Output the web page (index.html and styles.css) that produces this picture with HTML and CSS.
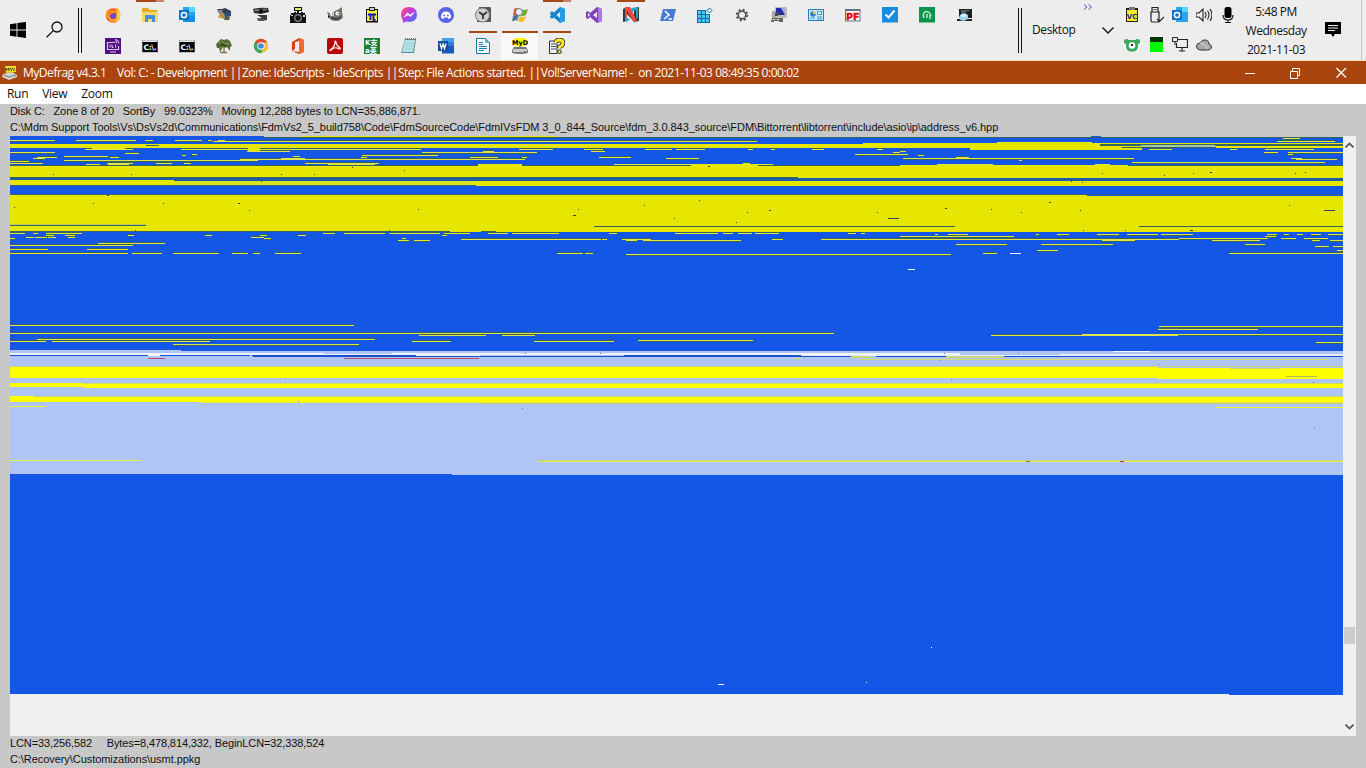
FILE: index.html
```html
<!DOCTYPE html>
<html lang="en">
<head>
<meta charset="utf-8">
<title>MyDefrag v4.3.1</title>
<link rel="stylesheet" href="styles.css">
</head>
<body>
<header class="taskbar">
  <svg class="start" viewBox="0 0 16 16"><path d="M0 2.2 6.5 1.3V7.5H0zM7.4 1.1 16 0v7.5H7.4zM0 8.4h6.5v6.3L0 13.8zM7.4 8.4H16V16l-8.6-1.2z"/></svg>
  <svg class="search" viewBox="0 0 17 17"><g fill="none" stroke="#111" stroke-width="1.3"><circle cx="11" cy="6" r="5"/><path d="M7.3 9.6.6 16.3"/></g></svg>
  <i class="grip"></i>
  <nav class="apps">
    <div class="app"><svg viewBox="0 0 16 16"><circle cx="8" cy="8.5" r="7.3" fill="#ff5a2c"/><path d="M2 3Q0 8 2 12q4 5 9 2 4-3 4-8-1-4-5-6 2 3 0 4-5-1-8-1z" fill="#ff9d1c"/><path d="M13 3q3 3 2 7-1 4-5 5 3-4 2-8z" fill="#ffd52e"/><path d="M1 9q2 7 8 7-4 0-5-3z" fill="#f2306b"/><circle cx="8" cy="8.6" r="3.4" fill="#7048c8"/><path d="M3 5q3-2 7 1l-4 1q-2 2 0 4-3-1-3-6" fill="#ff7a22"/></svg></div>
    <div class="app open more"><svg viewBox="0 0 16 16"><path d="M0 1h6l2 2h7v12H0z" fill="#e7aa2c"/><path d="M0 5h16v10H0z" fill="#ffd766"/><path d="M3 15V9q0-1 1-1h8q1 0 1 1v6h-3v-3H6v3z" fill="#3c91d9"/></svg></div>
    <div class="app"><svg viewBox="0 0 16 16"><path d="M4 0h12v15H4z" fill="#28a8ea"/><path d="M10 0h6v5h-6z" fill="#50d9ff"/><path d="M4 10l12-2v7H4z" fill="#1490df"/><rect y="3" width="10" height="10" fill="#0f70c4"/><circle cx="5" cy="8" r="2.6" fill="none" stroke="#fff" stroke-width="1.5"/></svg></div>
    <div class="app"><svg viewBox="0 0 16 16"><path d="M1 2l5 0 3-1 6 3v5l-5 1-6-4z" fill="#343d50"/><path d="M1 3l5 0 1 3-4 1z" fill="#888c90"/><path d="M4 6h5l2 4-4 2-4-3z" fill="#ba8a4c"/><path d="M8 6l6-1 1 4-6 1z" fill="#2d5286"/><path d="M3 8l2 2v1H2z" fill="#d3a52a"/><path d="M9 10h5l-1 3H8z" fill="#5f5548"/></svg></div>
    <div class="app"><svg viewBox="0 0 16 16"><path d="M0 2q7-2 15-1l1 4-8 2-7-1z" fill="#292929"/><path d="M1 2.500l13-1v1.500L2 4.500z" fill="#777"/><circle cx="8" cy="4" r="2" fill="#111"/><path d="M4 8h10v5l-5 1-4-2 4-1z" fill="#393939"/><path d="M4 11l7 1-1 2-5 0z" fill="#555"/></svg></div>
    <div class="app"><svg viewBox="0 0 16 16"><path d="M4 0h8v4H4z" fill="#111"/><path d="M5 1h6v2H5z" fill="#dfe868"/><path d="M7 4h2v2H7zM0 8h1V6h3V5h2v1h5V5h2v1h2v2h1v8H0z" fill="#111"/><circle cx="8" cy="11" r="4" fill="#777"/><circle cx="8" cy="11" r="2.500" fill="#111"/><path d="M1 8h2v1H1zM13 8h2v2h-2z" fill="#ddd"/></svg></div>
    <div class="app"><svg viewBox="0 0 16 16"><path d="M0 5l3 1 3-1 6-3 3-2v5l1 5q-2 4-7 4-6 0-7-4z" fill="#75756b"/><circle cx="5" cy="7" r="2" fill="#fff"/><circle cx="10.500" cy="6.500" r="2" fill="#fff"/><path d="M5 6.500h1v1H5zM10.500 6h1v1h-1zM1 8l2 2-2 1z" fill="#111"/><path d="M4 11l6 1 4-2" fill="none" stroke="#333" stroke-width="1.300"/></svg></div>
    <div class="app"><svg viewBox="0 0 16 16"><path d="M2 2h12v13.500H2z" fill="#111"/><path d="M3 3h10v11H3z" fill="#f6ee30"/><path d="M5 0h6v4H5z" fill="#222"/><path d="M6 1h4v2H6z" fill="#ccc"/><path d="M4 7.500h8M6.500 7.500V13M9.500 7.500V13h2" fill="none" stroke="#1414c8" stroke-width="1.800"/></svg></div>
    <div class="app"><svg viewBox="0 0 16 16"><defs><linearGradient id="msg" y2="1"><stop stop-color="#fa5968"/><stop offset=".45" stop-color="#c738df"/><stop offset="1" stop-color="#168fff"/></linearGradient></defs><path d="M8 0q8 0 8 7.5T8 15l-3-.4L2 16v-3Q0 11 0 7.5 0 0 8 0" fill="url(#msg)"/><path d="M3 10l3.500-4L9 8l4-2.500-3.500 4L7 7.700z" fill="#fff" stroke="#fff" stroke-width=".7"/></svg></div>
    <div class="app"><svg viewBox="0 0 16 16"><circle cx="8" cy="8" r="8" fill="#5864e8"/><path d="M3 11q0-4 2-6 3-1 6 0 2 2 2 6l-2.500 1-1-1.400h-3l-1 1.400z" fill="#fff"/><circle cx="6.200" cy="8.400" r="1" fill="#5864e8"/><circle cx="9.800" cy="8.400" r="1" fill="#5864e8"/></svg></div>
    <div class="app"><svg viewBox="0 0 16 16"><path d="M4 0h11q1 0 1 2v13H2z" fill="#555"/><circle cx="7.500" cy="8" r="7" fill="#d1d1cf" stroke="#777"/><path d="M4 5L8 8l4-3M8 8v4" fill="none" stroke="#333" stroke-width="1.800"/></svg></div>
    <div class="app"><svg viewBox="0 0 16 16"><path d="M2 2q3-2 6 0L7 8Q4 7 1 9z" fill="#e64d26"/><path d="M9 2q3 2 7 0l-2 6q-3 2-7 0z" fill="#70ae35"/><path d="M1 9q3-2 6 0l-2 5q-3-2-5 0z" fill="#438ad0"/><path d="M8 9q3 2 6 0l-2 5q-3 2-6 0z" fill="#f4bc20"/><circle cx="7" cy="5" r="3.500" fill="#e2f1ff" stroke="#778"/><path d="M5 8l-4 6" stroke="#755" stroke-width="1.500"/></svg></div>
    <div class="app open more"><svg viewBox="0 0 16 16"><path d="M11 0l5 2v12l-5 2L1 7V6l2-2 8 7V5L3 12l-2-2V9z" fill="#1688d0"/><path d="M11 0l5 2v12l-5 2z" fill="#279ce3"/></svg></div>
    <div class="app"><svg viewBox="0 0 16 16"><path d="M11 0l5 2v12l-5 2-7-6-2 2-2-1V5l2-1 2 2zM2 6v4l2-2zm9-1L7 8l4 3z" fill="#7d43b5" fill-rule="evenodd"/><path d="M12 0l4 2v12l-4 2z" fill="#a979df"/></svg></div>
    <div class="app open"><svg viewBox="0 0 16 16"><path d="M0 2l4-2 7 9V1l5-1v14l-5 1-7-8v7l-4 1z" fill="#34383a"/><path d="M2 0h5l7 14h-4L4 4v8l-2 1z" fill="#ee493a"/><path d="M8 1l7-1v12l-2-2V3L9 5zM2 9l5 4-5 2z" fill="#25a6c4"/></svg></div>
    <div class="app"><svg viewBox="0 0 16 16"><path d="M3 2h13l-3 12H0z" fill="#477bd1"/><path d="M5 4l4 4-5 4M8.500 12H12" fill="none" stroke="#fff" stroke-width="1.600"/></svg></div>
    <div class="app"><svg viewBox="0 0 16 16"><path d="M0 3h13v13H0z" fill="#126ca0"/><path d="M1 4h3v3H1zM5 4h3v3H5zM1 8h3v3H1zM5 8h3v3H5zM9 8h3v3H9zM1 12h3v3H1zM5 12h3v3H5zM9 12h3v3H9z" fill="#48c5ef"/><path d="M9 3h4v4H9z" fill="#eee"/><path d="M12.500 1l2.500 2.500L12.500 6 10 3.500z" fill="#d8f4fc" stroke="#17699a"/></svg></div>
    <div class="app"><svg viewBox="0 0 16 16"><circle cx="8" cy="8" r="5.200" fill="none" stroke="#505050" stroke-width="2" stroke-dasharray="2.040"/><circle cx="8" cy="8" r="3.800" fill="none" stroke="#505050" stroke-width="1.500"/></svg></div>
    <div class="app"><svg viewBox="0 0 16 16"><path d="M4 0h12v11H4z" fill="#c2bdaa"/><path d="M5 1h9v7H5z" fill="#222ca5"/><path d="M10 1h4v7z" fill="#99a8f0"/><path d="M1 4h4v7H1z" fill="#aaa"/><path d="M4 6l4-1-1 4H4z" fill="#44485b"/><path d="M1 11h11v4H0z" fill="#666"/><path d="M2 12h2v1H2zm4 0h2v1H6zM3 14h5v1H3z" fill="#eee"/></svg></div>
    <div class="app"><svg viewBox="0 0 16 16"><path d="M0 2h16v12H0z" fill="#247eb4"/><path d="M1 3h14v10H1z" fill="#c4efff"/><circle cx="5" cy="7" r="2.800" fill="#3679c3"/><path d="M5 4a3 3 0 0 1 3 3H5z" fill="#f7c947"/><path d="M9 4h5v4H9z" fill="#4799d6"/><path d="M10 5h3v2h-3z" fill="#e9f8ff"/><path d="M2 11h5M9 10h5M9 12h5" stroke="#448cc0"/></svg></div>
    <div class="app"><svg viewBox="0 0 16 16"><path d="M0 2h15.500v12.500H0z" fill="#5b7088"/><path d="M1 4h13.500v9.500H1z" fill="#fff"/><text x="7.800" y="12.500" text-anchor="middle" font-size="9.500" font-weight="bold" fill="#e00010" stroke="#e00010" stroke-width=".4">PF</text></svg></div>
    <div class="app"><svg viewBox="0 0 16 16"><path d="M0 0h16v15.500H0z" fill="#188bdc"/><path d="M3.500 7.500l3 3 6-7" fill="none" stroke="#fff" stroke-width="2"/></svg></div>
    <div class="app"><svg viewBox="0 0 16 16"><path d="M0 0h16v15.500H0z" fill="#08964a"/><path d="M5 11Q3 6 7 4.500q4 0 5 5M8 7v4M11 8v4" fill="none" stroke="#b3e2c6" stroke-width="1.600"/></svg></div>
    <div class="app"><svg viewBox="0 0 16 16"><path d="M3 2h13v9H3z" fill="#1c1f22"/><path d="M5 3h10l-10 4z" fill="#575e64"/><path d="M1 12h15v2H1z" fill="#222"/><path d="M3 10l2-3 4-1 3 2v4l-4 2-4-1z" fill="#9acfe6"/><path d="M4 9l4-2 3 2-3 1z" fill="#e3faff"/></svg></div>

    <div class="app"><svg viewBox="0 0 16 16"><path d="M0 0h16v16H0z" fill="#4b1183"/><path d="M2 4.500h8M2.500 4.500v7h11V8M5 14h6" fill="none" stroke="#e7b9ed" stroke-width="1.200"/><path d="M5 6.500v3M7 6.500v3h1.500M10.500 6.500v3M10 3q2 0 2 2.500M10 1.500q4 0 4 4" fill="none" stroke="#f0c7f4"/></svg></div>
    <div class="app"><svg viewBox="0 0 16 16"><path d="M0 2h16v12.500H0z" fill="#999"/><path d="M.500 4h15v10H.500z" fill="#000"/><path d="M1 2.500h14V4H1z" fill="#eee"/><text x="1.500" y="11.500" font-size="7.500" font-weight="bold" fill="#fff" textLength="13">C:\.</text></svg></div>
    <div class="app"><svg viewBox="0 0 16 16"><path d="M0 2h16v12.500H0z" fill="#999"/><path d="M.500 4h15v10H.500z" fill="#000"/><path d="M1 2.500h14V4H1z" fill="#eee"/><text x="1.500" y="11.500" font-size="7.500" font-weight="bold" fill="#fff" textLength="13">C:\.</text></svg></div>
    <div class="app"><svg viewBox="0 0 16 16"><path d="M8 8v7M4 14.500h7" stroke="#8b6a46" stroke-width="1.300"/><path d="M0 6l3-3 2-2 3 1 3-1 3 2 2 5-2 1 0 4-3-4-2 1-2-1-3 5-1-4-2 0z" fill="#536b32"/><path d="M2 6l4-3 3 3 4-1-3 4-4 0-3 2" fill="none" stroke="#7e974b"/><path d="M5 7l6 1" stroke="#2d431c" stroke-width="1.500"/></svg></div>
    <div class="app"><svg viewBox="0 0 16 16"><circle cx="8" cy="8" r="7.200" fill="#eac633"/><path d="M8 8L1.800 4.400A7.200 7.200 0 0 1 14.200 4.400H8z" fill="#e04a3d"/><path d="M8 8L1.800 4.400A7.200 7.200 0 0 0 8 15.200L11 9z" fill="#3ba35a"/><circle cx="8" cy="8" r="3.700" fill="#fff"/><circle cx="8" cy="8" r="2.800" fill="#4388e8"/></svg></div>
    <div class="app"><svg viewBox="0 0 16 16"><path d="M2 4l7-4 5 2v12l-5 2-7-3 7 1V3L5 4v7l-3 2z" fill="#dc3d0b"/><path d="M9 0l5 2v12l-5 2z" fill="#f36a2c"/></svg></div>
    <div class="app"><svg viewBox="0 0 16 16"><rect width="16" height="16" rx="2" fill="#b90808"/><path d="M3 12q5-3 5-8 0-2 1 0 0 3 4 6 1 2-3 0-3-1-6 2-1 1-1 0z" fill="none" stroke="#fff" stroke-width="1.200"/></svg></div>
    <div class="app"><svg viewBox="0 0 16 16"><path d="M0 0h16v16H0z" fill="#16803b"/><text x="1" y="7" font-size="7" font-weight="bold" fill="#fff">K安</text><text x="1" y="14.500" font-size="7" font-weight="bold" fill="#fff">a英</text></svg></div>
    <div class="app"><svg viewBox="0 0 16 16"><path d="M4 1h11l-2 14H0z" fill="#568b99"/><path d="M4 2h10l-2 12H1z" fill="#b9e2e8"/><path d="M4 5h9M3 8h9M3 11h8" stroke="#9fd0d9"/><path d="M4 1h11" stroke="#777" stroke-width="2" stroke-dasharray="1"/></svg></div>
    <div class="app"><svg viewBox="0 0 16 16"><path d="M4 0h12v15.500H4z" fill="#185abd"/><path d="M4 0h12v4H4z" fill="#41a5ee"/><path d="M4 4h12v4H4z" fill="#2b7cd3"/><path d="M0 3h10v10H0z" fill="#174f9f"/><path d="M2 5.500l1.500 5L5 6l1.500 4.500 1.500-5" fill="none" stroke="#fff" stroke-width="1.300"/></svg></div>
    <div class="app open"><svg viewBox="0 0 16 16"><path d="M1.500.500h9l4 4v11h-13z" fill="#fff" stroke="#14799e"/><path d="M10 0v5h5" fill="#68b8d4"/><path d="M4 4.500h4M4 6.500h4M4 8.500h8M4 10.500h8M4 12.500h5" stroke="#1687b5"/></svg></div>
    <div class="app open active"><svg viewBox="0 0 16 16"><path d="M2 9h12l2 3v3q-8 2-16 0v-3z" fill="#777"/><path d="M1 11h14v3H1z" fill="#ccc"/><path d="M12 13h2v1h-2z" fill="#18a23a"/><ellipse cx="8" cy="4" rx="8" ry="4.500" fill="#fff000"/><text x="8" y="6.500" text-anchor="middle" font-size="6.500" font-weight="bold">MyD</text></svg></div>
    <div class="app open"><svg viewBox="0 0 16 16"><path d="M.500 3H8v12.500H.500z" fill="#eee" stroke="#333"/><path d="M2 6h5M2 8.500h5M2 11h5" stroke="#557"/><path d="M7 5q0-3 3.500-3Q14 2 14 5q0 2.500-3.500 4v1" fill="none" stroke="#222" stroke-width="4.500"/><path d="M6.500 5q0-3 4-3Q14 2 14 5q0 2.500-3.500 4v1.500" fill="none" stroke="#ffea20" stroke-width="2.800"/><circle cx="10.500" cy="13.700" r="1.800" fill="#ffea20" stroke="#222"/></svg></div>
  </nav>
  <i class="grip"></i>
  <div class="desktop"><span>Desktop</span><svg class="more-bars" viewBox="0 0 10 6"><path d="M1 .500l3 2.500-3 2.500M5.500.500l3 2.500-3 2.500" fill="none" stroke="#5656b8"/></svg><svg class="expand" viewBox="0 0 12 7"><path d="M.500.500L6 6 11.500.500" fill="none" stroke="#111" stroke-width="1.400"/></svg></div>
  <div class="tray">
    <svg viewBox="0 0 16 16"><path d="M2 1h12v14H2z" fill="#222"/><path d="M3 3h10v11H3z" fill="#f5ed24"/><path d="M5 0h6v3H5z" fill="#777"/><text x="8" y="11.500" text-anchor="middle" font-size="7" font-weight="bold" fill="#242480">VC</text></svg>
    <svg viewBox="0 0 16 16"><path d="M4 5V.500h6V5M3 5h8v10H4q-1 0-1-2zM6 2v1M8 2v1M9 12l2.500 2.500L16 10" fill="none" stroke="#222" stroke-width="1.200"/></svg>
    <svg viewBox="0 0 16 16"><path d="M4 0h12v15H4z" fill="#28a8ea"/><path d="M10 0h6v5h-6z" fill="#50d9ff"/><rect y="3" width="10" height="10" fill="#0f70c4"/><circle cx="5" cy="8" r="2.600" fill="none" stroke="#fff" stroke-width="1.500"/></svg>
    <svg viewBox="0 0 16 16"><path d="M0 6h3l4-4v12l-4-4H0zM9 5q2 3 0 6M11.500 3.500q3 4.500 0 9M14 2q4 6 0 12" fill="none" stroke="#222" stroke-width="1.100"/></svg>
    <svg viewBox="0 0 16 16"><rect x="4.500" width="7" height="11" rx="2.500"/><path d="M3 8q0 5 5 5t5-5M8 13v3M5 15.500h6" fill="none" stroke="#111" stroke-width="1.200"/></svg>
    <svg viewBox="0 0 16 16"><circle cx="2.500" cy="4.500" r="2.500" fill="#3aa85d"/><circle cx="13.500" cy="4.500" r="2.500" fill="#3aa85d"/><path d="M2 3h12v6q0 5.500-6 5.500T2 9z" fill="#3aa85d"/><circle cx="8" cy="8.500" r="3.300" fill="#fff"/><path d="M7 7h2v2H7z" fill="#222"/></svg>
    <svg viewBox="0 0 16 16"><path d="M2 0h13v15H2z" fill="#003600"/><path d="M2 5h13v10H2z" fill="#00f800"/></svg>
    <svg viewBox="0 0 16 16"><path d="M6 2.500h9.500v8H4.500V6M10 10v4M7 14h6" fill="none" stroke="#222" stroke-width="1.200"/><path d="M.500.500h5v4h-5zM3 5v3" fill="#eee" stroke="#222"/></svg>
    <svg viewBox="0 0 16 16"><path d="M4 13Q0 12 .500 9 1 6 4 6q2-4 6-3 3 1 3 4 3 1 2.500 4-1 2-4 2z" fill="#aaa" stroke="#333"/><path d="M4 6q5 0 8 6" fill="none" stroke="#ddd"/></svg>
  </div>
  <div class="clock">5:48 PM<br>Wednesday<br>2021-11-03</div>
  <svg class="note" viewBox="0 0 16 16"><path d="M0 0h16v12H10l-2 3-2-3H0z"/><path d="M3 3.500h10M3 6h10M3 8.500h7" stroke="#eee"/></svg>
  <i class="peek"></i>
</header>
<main class="window">
  <div class="title">
    <svg class="logo" viewBox="0 0 15 14"><path d="M1 8l9-2 5 3v2l-8 3-7-3z" fill="#d4d4d4"/><path d="M2 9l5 2 7-2" stroke="#777" fill="none"/><path d="M3 0h11v6L4 7z" fill="#e7df20"/><path d="M4 5V2l1.500 2L7 2v3M8 2l1.500 1.500L11 2M9.500 3.500V5M12 2v3" fill="none" stroke="#222" stroke-width=".8"/></svg>
    <span class="caption">MyDefrag v4.3.1    Vol: C: - Development ||Zone: IdeScripts - IdeScripts ||Step: File Actions started. ||Vol!ServerName! -  on 2021-11-03 08:49:35 0:00:02</span>
    <svg class="controls" viewBox="0 0 104 12"><g fill="none" stroke="#fff"><path d="M0 6.500h10M45.500 4.500h7v7h-7zM47.500 4V1.500h7v7H53"/><path d="M91.500 1l9.500 9.500M101 1l-9.500 9.500" stroke-width="1.300"/></g></svg>
  </div>
  <div class="menu"><span>Run</span><span>View</span><span>Zoom</span></div>
  <div class="status top">
    <div class="state">Disk C:   Zone 8 of 20   SortBy   99.0323%   Moving 12,288 bytes to LCN=35,886,871.</div>
    <div class="path">C:\Mdm Support Tools\Vs\DsVs2d\Communications\FdmVs2_5_build758\Code\FdmSourceCode\FdmIVsFDM 3_0_844_Source\fdm_3.0.843_source\FDM\Bittorrent\libtorrent\include\asio\ip\address_v6.hpp</div>
  </div>
  <div class="view">
    <svg id="map" class="map" viewBox="10 136 1333 600" shape-rendering="crispEdges"></svg>
    <div class="scroll">
      <svg viewBox="0 0 9 6"><path d="M.500 5.500l4-4 4 4" fill="none" stroke="#505050" stroke-width="1.600"/></svg>
      <i class="thumb"></i>
      <svg viewBox="0 0 9 6"><path d="M.500.500l4 4 4-4" fill="none" stroke="#505050" stroke-width="1.600"/></svg>
    </div>
  </div>
  <div class="status bottom">
    <div class="state">LCN=33,256,582     Bytes=8,478,814,332, BeginLCN=32,338,524</div>
    <div class="path">C:\Recovery\Customizations\usmt.ppkg</div>
  </div>
</main>
<script src="map.js"></script>
</body>
</html>
```
FILE: styles.css
```css
* { box-sizing: border-box; }
body { margin: 0; width: 1366px; height: 768px; overflow: hidden; background: #c8c8c8; font-family: "Open Sans", "Noto Sans", sans-serif; color: #111; }
svg { display: block; }
svg text { font-family: "DejaVu Sans", "Noto Sans CJK SC", sans-serif; }
.taskbar { display: flex; height: 61px; background: #ededed; border-bottom: 1px solid #f5e3bd; }
.start { width: 16px; height: 16px; margin: 22px 0 0 10px; }
.search { width: 17px; height: 17px; margin: 21px 0 0 20px; }
.grip { width: 4px; height: 45px; margin-top: 8px; border: solid #111; border-width: 0 1px; }
.search + .grip { margin-left: 15px; }
.apps { display: grid; grid-template-columns: repeat(24, 37px); grid-template-rows: 31px 29px; width: 888px; margin-left: 12px; }
.app { padding: 7px 0 0 11px; background-repeat: no-repeat; background-position: 5px 0; background-size: 28px 2px; }
.app svg { width: 16px; height: 16px; }
.open { background-image: linear-gradient(#a84816, #a84816); }
.open.more { background-image: linear-gradient(90deg, #a84816 20px, #c4866a 20px); }
.open.active { background-color: #f9f9f9; background-position: 1px 0; background-size: 36px 2px; }
.apps + .grip { margin-left: 36px; }
.desktop { display: grid; grid-template-columns: 51px 19px 12px; width: 82px; margin-left: 10px; font-size: 12px; line-height: 60px; letter-spacing: -.4px; }
.more-bars { width: 10px; height: 6px; margin-top: 4px; }
.expand { width: 12px; height: 7px; margin-top: 27px; }
.tray { display: grid; grid-template-columns: repeat(5, 24px); grid-template-rows: 30px 30px; width: 120px; margin-left: 10px; padding-top: 7px; }
.tray svg { width: 16px; height: 16px; }
.clock { width: 84px; margin: 2px 0 0 -10px; text-align: center; font-size: 12px; line-height: 19px; letter-spacing: -.45px; }
.note { width: 16px; height: 16px; margin: 22px 0 0 7px; }
.peek { width: 1px; height: 60px; margin-left: 20px; background: #c5c5c5; }
.title { display: flex; align-items: center; height: 23px; background: #ab450f; color: #fff; }
.logo { width: 15px; height: 14px; margin-left: 2px; }
.caption { width: 1222px; padding-left: 6px; white-space: pre; font-size: 12px; letter-spacing: -.465px; }
.controls { width: 104px; height: 12px; margin-left: 6px; }
.menu { display: flex; gap: 14px; height: 20px; padding-left: 7px; background: #fff; font-size: 12px; line-height: 20px; letter-spacing: -.3px; }
.status { height: 32px; padding-left: 10px; font: 11px/16px "Liberation Sans", sans-serif; }
.status div { white-space: pre; }
.top { line-height: 15.500px; }
.bottom { line-height: 15.500px; }
.state { letter-spacing: -.11px; }
.path { letter-spacing: -.065px; }
.view { display: flex; height: 600px; padding-left: 10px; }
.map { width: 1333px; height: 600px; }
.scroll { display: flex; flex-direction: column; align-items: center; width: 13px; height: 600px; padding: 6px 0; background: #f0f0f0; }
.scroll svg { width: 9px; height: 6px; }
.thumb { width: 11px; height: 17px; margin: 479px 0 80px; background: #cdcdcd; }
```
FILE: map.js
```js
const map = document.getElementById('map');
const BLUE = '#1457e6', YELLOW = '#e6e600', LIGHT = '#afc5f5', BRIGHT = '#ffff00', GREEN = '#35645f';
const THIN = '#dfe548';

function rect(x1, x2, y, h, fill) {
  const r = document.createElementNS('http://www.w3.org/2000/svg', 'rect');
  r.setAttribute('x', x1);
  r.setAttribute('y', y);
  r.setAttribute('width', x2 - x1);
  r.setAttribute('height', h);
  r.setAttribute('fill', fill);
  map.append(r);
}

function rows(list, shaded, color) {
  if (shaded) for (const [y, ...p] of list) for (let i = 0; i < p.length; i += 2) rect(p[i], p[i + 1], y ^ 1, 1, GREEN);
  for (const [y, ...p] of list) for (let i = 0; i < p.length; i += 2) rect(p[i], p[i + 1], y, 1, color);
}

rect(10, 1343, 136, 600, '#f0f0f0');
rect(10, 1343, 137, 557, BLUE);
rect(1229, 1343, 694, 1, BLUE);
rect(10, 264, 136, 1, BLUE);
rect(264, 1343, 136, 1, '#c8c8c8');
rect(1091, 1101, 136, 1, BLUE);
rect(264, 1343, 137, 1, GREEN);
rect(301, 557, 136, 1, YELLOW);

rows([
  [138, 1283, 1300],
  [140, 10, 55, 76, 136, 145, 153, 175, 202, 208, 212, 218, 225],
  [141, 213, 757, 1277, 1335],
  [149, 85, 133, 181, 421, 519, 553, 584, 603, 645, 672, 676, 705, 748, 753, 771, 775, 812, 824, 877, 883, 1014, 1026, 1149, 1172, 1230, 1237, 1265, 1314],
  [151, 247, 290, 483, 494, 591, 605, 900, 906],
  [152, 10, 55, 422, 537, 893, 900, 1264, 1278, 1288, 1343],
  [153, 125, 139],
  [154, 192, 197, 855, 908, 1288, 1293],
  [155, 182, 186, 362, 438, 918, 924],
  [156, 64, 108, 293, 300],
  [157, 110, 119, 37, 57, 361, 367, 470, 498, 522, 527, 599, 631, 956, 969],
  [158, 33, 45, 281, 305, 666, 699, 903, 1134, 1291, 1302],
  [159, 240, 525, 1296, 1337],
  [160, 64, 258, 1019, 1022],
  [161, 10, 29],
  [162, 1132, 1325],
  [163, 10, 43, 107, 133, 156, 172, 184, 191, 305, 379, 743, 750],
  [164, 86, 100, 108, 129, 328, 375, 478, 521, 614, 773, 937, 993, 1095, 1110]
], true, THIN);

// Packed zones at the start of the disk
rect(10, 863, 144, 4, YELLOW);
rect(863, 1343, 143, 5, YELLOW);
rect(997, 1092, 142, 8, YELLOW);
rect(970, 1142, 147, 3, YELLOW);
rect(1100, 1343, 144, 2, GREEN);
rect(1141, 1215, 145, 2, '#a9c7a4');
rect(1122, 1216, 147, 1, GREEN);
rect(92, 125, 148, 1, YELLOW);
rect(248, 260, 148, 3, YELLOW);
rect(1185, 1235, 144, 1, GREEN);
rect(146, 159, 145, 1, GREEN);
rect(900, 908, 148, 1, GREEN);
rect(10, 1343, 165, 1, GREEN);
rect(10, 1343, 166, 12, YELLOW);
rect(478, 522, 164, 2, YELLOW);
rect(691, 758, 164, 2, YELLOW);
rect(900, 1128, 165, 1, YELLOW);
rect(1145, 1230, 165, 1, GREEN);
rect(10, 798, 177, 1, GREEN);
rect(10, 1343, 178, 3, '#1d5aa5');
rect(10, 174, 180, 5, YELLOW);
rect(174, 476, 181, 4, '#dce21c');
rect(476, 1343, 181, 5, YELLOW);
rect(10, 476, 185, 1, '#296a89');
rect(10, 1343, 194, 1, '#36658a');
rect(10, 1087, 195, 37, YELLOW);
rect(1087, 1343, 196, 36, YELLOW);
rect(10, 146, 224, 1, '#b9cb62');
rect(10, 146, 225, 1, GREEN);
rect(594, 955, 226, 1, GREEN);
rect(1139, 1343, 226, 1, GREEN);
rect(10, 450, 231, 1, GREEN);
rect(481, 496, 231, 1, GREEN);

rows([
  [233, 10, 25, 33, 38, 46, 82, 323, 335, 344, 385, 389, 440, 444, 470, 488, 508, 512, 559, 609, 617, 675, 718, 723, 733, 738, 752, 755, 779, 848, 856, 861, 865],
  [234, 935, 938, 948, 968, 1036, 1039, 1057, 1069, 1097, 1119, 1127, 1158, 1161, 1193, 1267, 1277, 1284, 1289, 1297, 1303, 1311, 1321, 1328, 1343],
  [235, 46, 54, 65, 75, 128, 134, 205, 212, 260, 267, 298, 306, 442, 447],
  [236, 900, 1014, 1265, 1276],
  [237, 26, 34, 35, 47, 48, 56, 68, 75, 251, 264],
  [238, 10, 15, 264, 271, 402, 406, 1179, 1268, 1281, 1296, 1304, 1328],
  [239, 461, 601, 602, 607, 622, 651, 772, 783, 821, 1179],
  [240, 398, 409, 414, 430, 626, 637, 643, 741, 1102, 1135, 1212, 1260, 1312, 1320, 1330, 1343],
  [243, 98, 165], [244, 956, 1007, 1041, 1113, 1245, 1265],
  [245, 10, 133], [246, 1315, 1329, 1333, 1343],
  [249, 10, 48, 87, 128], [250, 1037, 1058, 1337, 1343],
  [253, 10, 128, 132, 162, 173, 219, 232, 248, 253, 260, 275, 301, 557, 583, 585, 593, 983, 997, 1229, 1343],
  [254, 626, 951],
  [325, 10, 354], [326, 1159, 1343], [329, 1158, 1258],
  [333, 10, 834], [334, 1082, 1343],
  [335, 419, 486, 502, 535, 991, 1178],
  [339, 37, 375], [340, 638, 753],
  [341, 10, 46, 52, 210, 412, 451, 534, 614],
  [342, 1316, 1343], [344, 173, 359]
], true, THIN);

rect(1010, 1021, 253, 1, '#fff');
rect(908, 915, 269, 1, '#fff');

// Isolated clusters inside the packed zones
for (const [x, y, w] of [
  [53, 174, 1], [131, 174, 1], [281, 174, 1], [314, 174, 1], [352, 167, 1], [404, 170, 1],
  [93, 203, 1], [163, 203, 1], [238, 203, 2], [14, 207, 1], [249, 210, 1], [418, 209, 1],
  [107, 195, 2], [699, 200, 1], [644, 205, 1], [578, 209, 1], [573, 215, 3], [747, 212, 1],
  [769, 210, 2], [877, 212, 1], [888, 218, 11], [674, 218, 1], [736, 222, 1],
  [945, 208, 2], [1049, 202, 2], [991, 209, 1], [1021, 212, 1], [1080, 210, 1],
  [1102, 173, 1], [1164, 175, 1], [1193, 173, 1], [1210, 172, 2], [1289, 205, 1],
  [1324, 210, 11], [1295, 173, 1], [1305, 172, 1], [1071, 181, 1], [1082, 182, 1],
  [1083, 230, 1], [1125, 230, 1], [1190, 230, 3], [708, 166, 2], [261, 181, 1],
  [135, 230, 1], [389, 230, 1]
]) rect(x, x + w, y, 1, '#345');

// Current zone
rect(10, 1343, 350, 124, LIGHT);
rect(181, 1343, 350, 1, BLUE);
rect(10, 700, 353, 2, '#edf2fb');
rect(700, 1343, 354, 2, '#e8eef9');
rect(497, 960, 353, 2, '#edf2fb');
rect(324, 392, 353, 1, LIGHT);
rect(960, 1060, 354, 1, LIGHT);
rect(1113, 1150, 351, 1, '#f2f6ff');
rect(10, 250, 355, 1, '#1950cc');
rect(252, 416, 355, 1, '#1950cc');
rect(253, 851, 356, 1, '#1950cc');
rect(876, 946, 356, 1, '#1950cc');
rect(624, 801, 355, 1, '#1950cc');
rect(1004, 1343, 356, 1, '#1950cc');
rect(148, 160, 353, 3, '#f4f7ff');
rect(416, 480, 353, 3, '#edf2fb');
rect(851, 873, 356, 2, '#c9d57c');
rect(946, 1004, 356, 2, '#c9d57c');
rect(148, 165, 358, 1, '#bc466e');
rect(344, 479, 358, 1, '#bc466e');
rect(794, 801, 358, 1, THIN);
rect(860, 1329, 359, 1, '#d5df65');
rect(10, 1343, 366, 1, '#c9d47c');
rect(10, 1158, 367, 11, BRIGHT);
rect(1158, 1343, 368, 11, BRIGHT);
rect(1230, 1281, 368, 1, '#cbd66d');
rect(1286, 1317, 376, 1, '#aeb864');
rect(10, 1343, 383, 5, BRIGHT);
rect(82, 1343, 383, 1, '#d3df58');
rect(10, 84, 387, 1, LIGHT);
rect(10, 1343, 396, 1, '#c4d26e');
rect(10, 1343, 397, 5, BRIGHT);
rect(10, 34, 396, 1, BRIGHT);
rect(201, 1343, 402, 1, '#e3e83c');
rect(480, 1343, 403, 1, '#c1d077');
rows([[406, 10, 46], [407, 1215, 1343], [460, 10, 142], [461, 538, 1343]], false, '#eef13a');
rect(538, 1343, 460, 1, '#bfce94');
rect(1120, 1124, 461, 1, '#b54848');
rect(1026, 1030, 461, 1, '#a76b4b');
for (const [x, y] of [[285, 378], [298, 401], [522, 408], [940, 360], [951, 379], [1158, 364], [1313, 382], [1314, 427], [525, 353], [600, 353], [944, 353], [1018, 353]]) rect(x, x + 1, y, 1, '#6e7998');
rect(452, 1343, 474, 1, LIGHT);
rect(931, 932, 647, 1, '#fff');
rect(866, 867, 682, 1, '#fff');
rect(718, 724, 684, 1, '#fff');
```
